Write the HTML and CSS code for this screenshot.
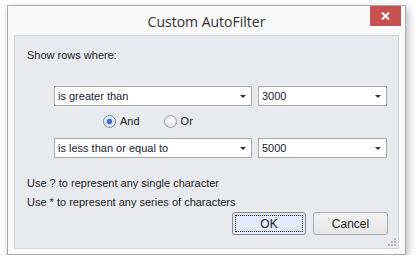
FILE: index.html
```html
<!DOCTYPE html>
<html lang="en">
<head>
    <meta charset="UTF-8">
    <title>Custom AutoFilter</title>
    <link rel="stylesheet" href="styles.css">
</head>
<body>
    <div class="dialog">
        <div class="title-bar">
            <span class="title">Custom AutoFilter</span>
            <div class="close-btn">
                <svg width="9" height="8" viewBox="0 0 9 8"><path d="M1 0.5 L8 7.5 M8 0.5 L1 7.5" stroke="#fff" stroke-width="2"/></svg>
            </div>
        </div>

        <div class="panel">
            <div class="caption">Show rows where:</div>

            <div class="conditions">
                <div class="cond-row">
                    <div class="combo op"><span>is greater than</span><i class="arrow"></i></div>
                    <div class="combo val"><span>3000</span><i class="arrow"></i></div>
                </div>

                <div class="radio-row">
                    <label class="radio checked"><span class="dot"></span>And</label>
                    <label class="radio"><span class="dot"></span>Or</label>
                </div>

                <div class="cond-row">
                    <div class="combo op"><span>is less than or equal to</span><i class="arrow"></i></div>
                    <div class="combo val"><span>5000</span><i class="arrow"></i></div>
                </div>
            </div>

            <div class="hint first">Use ? to represent any single character</div>
            <div class="hint">Use * to represent any series of characters</div>

            <div class="buttons">
                <button class="btn ok"><span>OK</span></button>
                <button class="btn">Cancel</button>
            </div>

            <!-- size grip -->
            <svg class="grip" width="8" height="8" viewBox="0 0 8 8" fill="#b8b8b8">
                <rect x="6" y="0" width="2" height="2"/>
                <rect x="3" y="3" width="2" height="2"/><rect x="6" y="3" width="2" height="2"/>
                <rect x="0" y="6" width="2" height="2"/><rect x="3" y="6" width="2" height="2"/><rect x="6" y="6" width="2" height="2"/>
            </svg>
        </div>
    </div>
</body>
</html>
```

FILE: styles.css
```css
body {
    margin: 0;
    padding: 5px 0 0 7px;
    background: #fff;
    font-family: "Liberation Sans", Arial, sans-serif;
    font-size: 11px;
    color: #222;
}
.dialog {
    width: 397px;
    height: 248px;
    border: 1px solid #a9a9a9;
    background: #fafafa;
    box-shadow: 2px 3px 8px rgba(0,0,0,0.28);
    display: flex;
    flex-direction: column;
}
.title-bar {
    position: relative;
    height: 29px;
    display: flex;
    justify-content: center;
    align-items: center;
}
.title {
    font-family: "Open Sans", sans-serif;
    font-size: 14px;
    color: #333;
    margin-top: 2px;
}
.close-btn {
    position: absolute;
    top: 0;
    right: 4px;
    width: 31px;
    height: 20px;
    background: #c75050;
    display: flex;
    justify-content: center;
    align-items: center;
}
.panel {
    position: relative;
    flex: 1;
    margin: 0 6px 5px 6px;
    border: 1px solid #d4d4d4;
    background: #e9eaee;
    padding: 11px 10px 0 12px;
}
.caption {
    line-height: 16px;
}
.conditions {
    margin: 23px 0 0 27px;
}
.cond-row {
    display: flex;
    gap: 6px;
}
.combo {
    box-sizing: border-box;
    height: 20px;
    border: 1px solid #ababab;
    background: #fff;
    display: flex;
    align-items: center;
    padding: 0 0 0 3px;
    color: #1b1b2e;
}
.combo span {
    flex: 1;
}
.combo.op {
    width: 198px;
}
.combo.val {
    width: 129px;
}
.arrow {
    width: 0;
    height: 0;
    border-left: 3px solid transparent;
    border-right: 3px solid transparent;
    border-top: 3px solid #333;
    margin: 1px 5px 0 0;
}
.radio-row {
    display: flex;
    gap: 24px;
    height: 16px;
    margin: 7px 0 9px 49px;
    align-items: center;
}
.radio {
    display: flex;
    align-items: center;
    gap: 4px;
}
.dot {
    box-sizing: border-box;
    width: 13px;
    height: 13px;
    border-radius: 50%;
    border: 1px solid #9a9a9a;
    background: radial-gradient(circle at 50% 35%, #ffffff, #dcdcdc);
}
.radio.checked .dot {
    border-color: #6b86b3;
    background: radial-gradient(circle, #3e6fc4 0 2.5px, #cfdcf2 3px, #ffffff 6px);
}
.hint {
    line-height: 19px;
}
.hint.first {
    margin-top: 16px;
}
.buttons {
    display: flex;
    justify-content: flex-end;
    gap: 7px;
    margin-top: 0;
}
.btn {
    box-sizing: border-box;
    width: 75px;
    height: 23px;
    border: 1px solid #acacac;
    border-radius: 3px;
    background: linear-gradient(#f3f3f3, #e6e6e6);
    font-family: inherit;
    font-size: 12px;
    color: #222;
    padding: 0;
}
.btn.ok {
    width: 74px;
    border-color: #8a8a8a;
    background: #e3ecfd;
    padding: 2px;
}
.btn.ok span {
    display: flex;
    height: 100%;
    justify-content: center;
    align-items: center;
    border: 1px dotted #222;
    box-sizing: border-box;
}
.grip {
    position: absolute;
    right: 2px;
    bottom: 2px;
}
```
